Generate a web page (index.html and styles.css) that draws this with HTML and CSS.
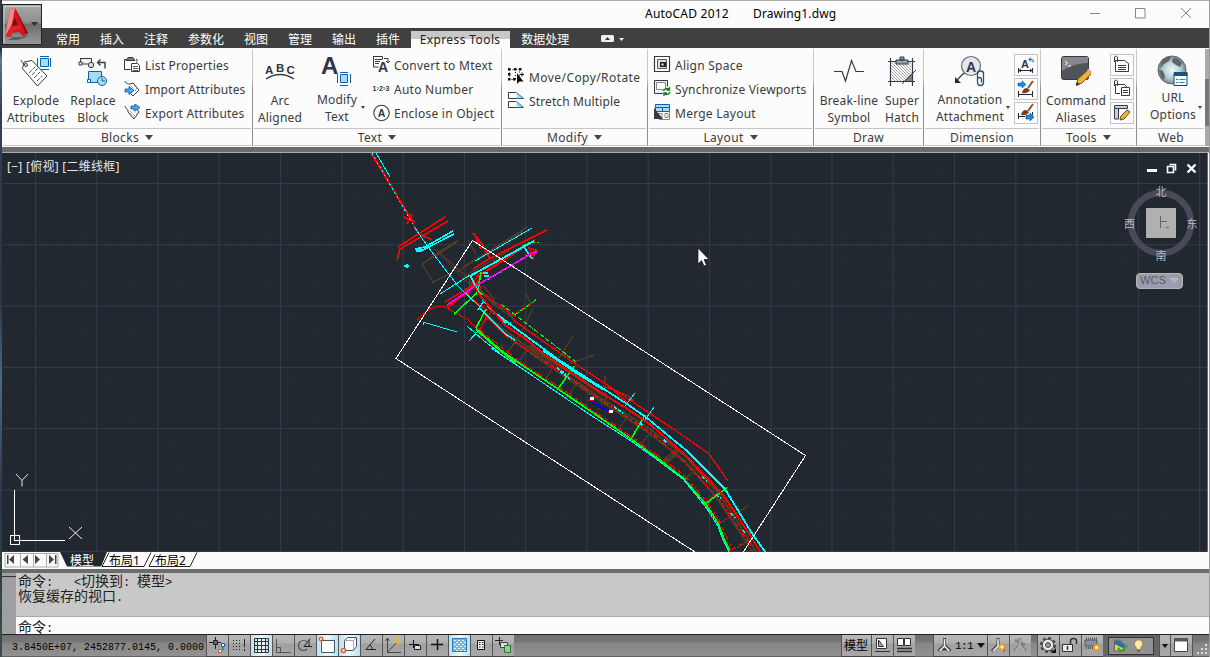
FILE: index.html
```html
<!DOCTYPE html>
<html lang="zh">
<head>
<meta charset="utf-8">
<title>AutoCAD 2012 - Drawing1.dwg</title>
<link rel="stylesheet" href="styles.css">
</head>
<body>
<div class="window">
  <header class="titlebar">
    <span class="title-app">AutoCAD 2012</span><span class="title-doc">Drawing1.dwg</span>
    <svg class="winbtns" viewBox="1085 1 120 27"><path d="M1090 13.5h10M1135.500 8.500h9.500v9.500h-9.500zM1181 8l10 10M1191 8l-10 10" fill="none" stroke="#858585"/></svg>
  </header>
  <button class="appbtn" aria-label="menu">
    <svg viewBox="2 4 40 41" width="40" height="41">
      <defs><linearGradient id="ag" x1="0" y1="0" x2="0" y2="1"><stop offset="0" stop-color="#aaa"/><stop offset=".45" stop-color="#8d8d8d"/><stop offset=".5" stop-color="#6c6c6c"/><stop offset="1" stop-color="#999"/></linearGradient></defs>
      <rect x="2.500" y="4.500" width="39" height="40" fill="url(#ag)" stroke="#222"/>
      <path d="M4 43.500V6.500H40" fill="none" stroke="#ccc"/>
      <path d="M8 40l5-3 8 0 7-3-2 3-8 3z" fill="#4a4a4a" opacity=".7"/>
      <path d="M10 9l5-1 13 25-5 3-4-4-7 1-1 4-6-1z" fill="#d3141b"/>
      <path d="M10 9l5-1-3 16-6 11-1 1z" fill="#f08a88"/>
      <path d="M15 8l13 25-2 1z" fill="#8b0d12"/>
      <path d="M13 22l2-4 3 8-7 2z" fill="#7c0b10"/><path d="M5 36l7-10 8-1 1 4-8 1-2 7z" fill="#e0242a"/>
      <path d="M31 22h7l-3.500 4z" fill="#2b2f3d"/>
    </svg>
  </button>
  <nav class="tabs">
    <span>常用</span><span>插入</span><span>注释</span><span>参数化</span><span>视图</span><span>管理</span><span>输出</span><span>插件</span><span class="tab-on">Express Tools</span><span>数据处理</span>
    <svg class="tabmin" viewBox="600 33 26 12"><rect x="601" y="35" width="13" height="7" rx="1.500" fill="#eee"/><path d="M605 40l2.500-3 2.500 3z" fill="#333"/><path d="M619 38h5l-2.500 3z" fill="#eee"/></svg>
  </nav>

  <section class="ribbon">
    <div class="panel p-blocks">
      <div class="panel-body">
        <div class="big w60"><svg viewBox="20 55 32 32"><path d="M22.500 68.500l1.500-6.500 8-1.500 15 15.500-9.500 10z" fill="#fff" stroke="#333a48"/><path d="M21 60c1 4 4 5 6 4" fill="none" stroke="#333a48"/><circle cx="26" cy="65" r="1.500" fill="#fff" stroke="#333a48"/><path d="M29 73l7-7M32 75l6-7M34 78l6-6M37 81l5-5" stroke="#555" stroke-dasharray="4 1"/><path d="M40.500 58.500h8v8h-8z" fill="#a9dcf2" stroke="#0b62a8"/><path d="M37.500 58v9M50.500 58v9M40 56.500h9M40 69.500h9" stroke="#0b62a8"/></svg><b>Explode<br>Attributes</b></div>
        <div class="big w54"><svg viewBox="77 55 32 32"><path d="M80.500 58.500h11v4M80.500 58v6h8" fill="#eee" stroke="#333a48"/><circle cx="91" cy="65" r="2.700" fill="#ddd" stroke="#333a48"/><path d="M79 62h3v3h-3z" fill="#fff" stroke="#333a48"/><path d="M98 62.500h7v6M100.500 59.500l-3 3 3 3" fill="none" stroke="#333a48" stroke-width="1.400"/><path d="M88.500 71.500h13v11h-13z" fill="#a9dcf2" stroke="#0b62a8"/><path d="M87.500 79.500h3v3h-3z" fill="#fff" stroke="#0b62a8"/><circle cx="102" cy="81" r="4.500" fill="#a9dcf2" stroke="#0b62a8"/><path d="M102 78v3h3" fill="none" stroke="#0b62a8"/></svg><b>Replace<br>Block</b></div>
        <div class="rows r4">
          <div class="row"><svg viewBox="124 57 18 18"><path d="M126.500 60.500h-2v10h6M136 60.500h1v2" fill="none" stroke="#333a48"/><path d="M128 58.500h5l2 3h-9z" fill="#777" stroke="#333a48"/><path d="M131.500 64.500h5v-1l3 3v6h-8z" fill="#fff" stroke="#333a48"/><path d="M133 67.500h5M133 69.500h5M133 71.500h5" stroke="#555"/></svg><i class="s1">List Properties</i></div>
          <div class="row"><svg viewBox="124 81 18 18"><path d="M125 82c1 3 3 3 5 3l3-1 6 7-6 6-5-5" fill="#fff" stroke="#333a48"/><path d="M131 87l5 5M134 86l3 4" stroke="#777" stroke-dasharray="1 1"/><path d="M125 90h4v-2.500l5 4-5 4V93h-4z" fill="#4aa8ec" stroke="#0b4f90" stroke-width=".8"/></svg><i class="s0">Import Attributes</i></div>
          <div class="row"><svg viewBox="124 105 18 18"><path d="M125 107c1 3 2 3 3 4l0 2 6 7 5-7-2-3" fill="#fff" stroke="#333a48"/><path d="M130 112l5 5M133 111l4 4M130 114l4 4" stroke="#777" stroke-dasharray="1 1"/><path d="M131 107h4v-2l5 3.500-5 3.500v-2h-4z" fill="#4aa8ec" stroke="#0b4f90" stroke-width=".8"/></svg><i class="s1">Export Attributes</i></div>
        </div>
      </div>
      <div class="panel-name">Blocks<u></u></div>
    </div>

    <div class="panel p-text">
      <div class="panel-body">
        <div class="big w54"><svg viewBox="264 55 32 32"><g class="glyph" font-size="11.500"><text x="265" y="74">A</text><text x="276" y="71.500">B</text><text x="286.500" y="74">C</text></g><path d="M266 79q14-9 28 0" fill="none" stroke="#333a48" stroke-width="1.300"/></svg><b>Arc<br>Aligned</b></div>
        <div class="big w60 up1"><svg viewBox="321 55 32 32"><text class="glyph" x="321" y="74" font-size="24">A</text><path d="M340.500 74.500h7v8h-7z" fill="#a9dcf2" stroke="#0b62a8"/><path d="M337.500 74v9M350.500 74v9M340 72.500h8M340 85.500h8" stroke="#0b62a8"/></svg><b>Modify<br>Text</b><s></s></div>
        <div class="rows r6">
          <div class="row"><svg viewBox="373 57 18 18"><path d="M373.500 57.500h9v3M373.500 57v11h5" fill="none" stroke="#333a48"/><path d="M375 60.500h7M375 62.500h5M375 64.500h4M384 59.500h4v4M386 62l2 2 2-2" fill="none" stroke="#333a48"/><text class="glyph" x="378" y="73" font-size="14">A</text></svg><i class="s2">Convert to Mtext</i></div>
          <div class="row"><svg viewBox="373 81 18 18"><g class="glyph" font-size="7"><text x="372.500" y="92">1</text><text x="379" y="92">2</text><text x="385.500" y="92">3</text></g><path d="M377 88l1.500 1.500-1.500 1.500M383.500 88l1.500 1.500-1.500 1.500" fill="none" stroke="#333a48" stroke-width=".8"/></svg><i class="s2">Auto Number</i></div>
          <div class="row"><svg viewBox="372 104 18 18"><circle cx="380.500" cy="113" r="7.700" fill="#fff" stroke="#333a48" stroke-width="1.100"/><text class="glyph" x="376.700" y="117" font-size="10.500">A</text></svg><i class="s2">Enclose in Object</i></div>
        </div>
      </div>
      <div class="panel-name">Text<u></u></div>
    </div>

    <div class="panel p-modify">
      <div class="panel-body">
        <div class="rows r6">
          <div class="row"><svg viewBox="508 69 18 18"><path d="M509.500 70.500h10v10h-10zM515.500 70v11" fill="none" stroke="#111" stroke-dasharray="1 2"/><path d="M508 69h2.500v2.500H508zM514 69h2.500v2.500H514zM519 69h2.500v2.500H519zM508 74h2.500v2.500H508zM508 79h2.500v2.500H508zM513 79h2.500v2.500H513z" fill="#111"/><path d="M517 74v11l2.500-2.500h4z" fill="#111"/><path d="M520 75.500h4M522 73.500v4" stroke="#111"/></svg><i class="s3">Move/Copy/Rotate</i></div>
          <div class="row"><svg viewBox="508 93 18 18"><path d="M516 93.500h-7.500v6h15M516 102.500h-7.500v6h15" fill="none" stroke="#333a48"/><path d="M516.500 93.500l7 6h-7M516.500 102.500l7 6h-7" fill="#a9dcf2" stroke="#0b62a8" stroke-width=".9"/></svg><i class="s0">Stretch Multiple</i></div>
        </div>
      </div>
      <div class="panel-name">Modify<u></u></div>
    </div>

    <div class="panel p-layout">
      <div class="panel-body">
        <div class="rows r6">
          <div class="row"><svg viewBox="654 57 18 18"><path d="M654.500 57.500h15v15h-15z" fill="#fff" stroke="#333a48" stroke-width="1.200"/><path d="M657.500 60.500h9v9h-9z" fill="#ddd" stroke="#555"/><path d="M660 63h6v5h-6z" fill="#222"/><path d="M661.500 64.500h2v2h-2z" fill="#fff"/></svg><i class="s2">Align Space</i></div>
          <div class="row"><svg viewBox="654 81 18 18"><path d="M663 94.500h-8.500v-13h13v6" fill="#eef1f4" stroke="#333a48"/><path d="M656.500 83.500h9v7h-9z" fill="#fff" stroke="#888"/><path d="M663.500 92c1-3 4-3 5.500-1.500M669.500 88v3h-3M670 93c-1 3-4 3-5.500 1.500M664 97v-3h3" fill="none" stroke="#177a1c" stroke-width="1.300"/></svg><i class="s1">Synchronize Viewports</i></div>
          <div class="row"><svg viewBox="654 105 18 18"><path d="M655.500 105.500h14v7h-14z" fill="#a9dcf2" stroke="#0b62a8"/><path d="M656 108.500h13M662.500 108v4" stroke="#0b62a8"/><path d="M658 114.500h4v4h-4zM665 114.500h3v4h-3zM659 120.500h10.500v-8" fill="#fff" stroke="#888"/><path d="M654 109v11h9z" fill="#333a48"/></svg><i class="s2">Merge Layout</i></div>
        </div>
      </div>
      <div class="panel-name">Layout<u></u></div>
    </div>

    <div class="panel p-draw">
      <div class="panel-body">
        <div class="big w66"><svg viewBox="833 55 32 32"><path d="M834 71.500h8l3.500 9.500 6-20.500 4.500 11h8" fill="none" stroke="#333a48" stroke-width="1.200"/></svg><b>Break-line<br>Symbol</b></div>
        <div class="big w40"><svg viewBox="885 55 32 32"><defs><pattern id="h" width="3" height="3" patternUnits="userSpaceOnUse"><path d="M0 0l3 3" stroke="#777" stroke-width=".7"/></pattern></defs><path d="M890.500 61.500h20v20h-20z" fill="url(#h)"/><path d="M887 61.500h27M887 81.500h27M889.500 58v28M911.500 58v28" stroke="#333a48" stroke-width="1.200"/><path d="M911 73v8h-8z" fill="#7b7f88"/><path d="M915 70l-14 14" stroke="#333a48"/><path d="M895 60h12v4h-12zM899 57h4v3h-4z" fill="#9a9ea6" stroke="#333a48"/></svg><b>Super<br>Hatch</b></div>
      </div>
      <div class="panel-name">Draw</div>
    </div>

    <div class="panel p-dim">
      <div class="panel-body">
        <div class="big w84 up1"><svg viewBox="954 55 32 32"><circle cx="971" cy="66" r="9.500" fill="#e4e7ea" stroke="#666c76" stroke-width="1.200"/><text class="glyph" x="966" y="71.500" font-size="14">A</text><path d="M964 73l-8 8" stroke="#333a48" stroke-width="1.300"/><path d="M955 77v6h6z" fill="#222837"/><path d="M977.500 80v-6.500q0-2.500 3-2.500t3 2.500v9q0 3-3 3t-3-3v-3q0-2 2-2t2 2v3" fill="none" stroke="#2c4f73" stroke-width="1.300"/></svg><b>Annotation<br>Attachment</b><s></s></div>
        <div class="mini">
          <span><svg viewBox="1017 56 18 18"><text class="glyph" x="1021" y="68" font-size="11">A</text><path d="M1018.500 68v5M1032.500 68v5M1019 70.500h13M1021 69l-2 1.500 2 1.500M1030 69l2 1.500-2 1.500" fill="none" stroke="#222837"/><path d="M1029 59.500h3q2 0 1 3M1031 57.500l-2 2 2 2" fill="none" stroke="#0b62a8"/></svg></span>
          <span><svg viewBox="1017 80 18 18"><path d="M1018.500 91v6M1032.500 91v6M1019 94.500h13" stroke="#222837"/><path d="M1018 83h4v-2l4 3.500-4 3.500v-2h-4z" fill="#1f87dc" stroke="#0b4f90" stroke-width=".6"/><path d="M1022 93q1-5 5-5l3 2q-3 4-8 3z" fill="#7b3f1b"/><path d="M1028 88l5-7" stroke="#8f5228" stroke-width="2"/></svg></span>
          <span><svg viewBox="1017 104 18 18"><path d="M1018.500 113v6M1032.500 112v3M1019 116.500h6" stroke="#222837"/><path d="M1026 115h4v-2l4 4-4 4v-2h-4z" fill="#1f87dc" stroke="#0b4f90" stroke-width=".6"/><path d="M1021 115q1-5 5-5l3 2q-3 4-8 3z" fill="#7b3f1b"/><path d="M1028 111l5-7" stroke="#8f5228" stroke-width="2"/></svg></span>
        </div>
      </div>
      <div class="panel-name">Dimension</div>
    </div>

    <div class="panel p-tools">
      <div class="panel-body">
        <div class="big w66"><svg viewBox="1060 55 32 32"><rect x="1061.500" y="56.500" width="27" height="23" rx="2" fill="#50545a" stroke="#33363b"/><path d="M1062 57h26v6q-14 0-26 8z" fill="#84888d"/><path d="M1065 61l2.500 2-2.500 2M1068 66h3" fill="none" stroke="#fff"/><path d="M1076 85l2-6 10-9 3 4-9 9z" fill="#f2b335" stroke="#8b5a12"/><path d="M1087 70l2-1.500 3 3.500-2 2z" fill="#e9a7a0"/><path d="M1076 86l1-4 3 2.500z" fill="#333"/></svg><b>Command<br>Aliases</b></div>
        <div class="mini">
          <span><svg viewBox="1113 56 18 18"><path d="M1115.500 60.500h9l4 3v8h-13z" fill="#fff" stroke="#333a48"/><path d="M1114.500 62v-5q2-2 3 0v5M1118 65.500h8M1118 67.500h8M1118 69.500h8" fill="none" stroke="#333a48"/></svg></span>
          <span><svg viewBox="1113 80 18 18"><path d="M1120 93.500h-4.500v-9h9l3 3" fill="#fff" stroke="#333a48"/><path d="M1114.500 86v-5q2-2 3 0v5" fill="none" stroke="#333a48"/><path d="M1121.500 87.500h8v8h-8z" fill="#fff" stroke="#333a48"/><path d="M1123 90.500h5M1123 92.500h5" stroke="#333a48"/></svg></span>
          <span><svg viewBox="1113 104 18 18"><path d="M1114.500 105.500h13v3h-13zM1114.500 109v10h4v-10" fill="#c9ced4" stroke="#333a48"/><path d="M1120 120l1-4 6-6 3 2-6 7z" fill="#f2b335" stroke="#6b4a18"/></svg></span>
        </div>
      </div>
      <div class="panel-name">Tools<u></u></div>
    </div>

    <div class="panel p-web">
      <div class="panel-body">
        <div class="big w62 up3"><svg viewBox="1155 55 32 32"><defs><radialGradient id="gl"><stop offset="0" stop-color="#e8fbff"/><stop offset=".6" stop-color="#b5ced5"/><stop offset="1" stop-color="#7c878e"/></radialGradient></defs><circle cx="1170" cy="70" r="14" fill="url(#gl)" stroke="#5d666c"/><path d="M1160 60q5-4 9-3l-2 4-5 3-4 4zM1171 58q6 0 9 5l-2 4-4-2-4-3zM1157 70l4 1 2 5-1 4-3-3z" fill="#5e656b"/><path d="M1172 73.500h13v12h-13z" fill="#f4fbff" stroke="#15486f"/><path d="M1172 72h13.500v4H1172z" fill="#244f73"/><path d="M1174 79.500h2M1177.500 79.500h6M1174 82.500h2M1177.500 82.500h5" stroke="#1f87dc"/></svg><b>URL<br>Options</b><s></s></div>
      </div>
      <div class="panel-name">Web</div>
    </div>
    <div class="ribbon-end"></div>
  </section>
  <div class="divider"></div>

  <main class="viewport">
    <svg class="drawing" viewBox="3 153 1204 399" width="1204" height="399">
      <defs>
        <pattern id="dots" x="35" y="183" width="12.260" height="12.260" patternUnits="userSpaceOnUse"><rect width="1" height="1" fill="#2b323b"/></pattern>
        <pattern id="grid" x="35" y="183" width="61.270" height="61.300" patternUnits="userSpaceOnUse"><path d="M.5 0V62M0 .5H62" stroke="#363b4b" fill="none"/></pattern>
      </defs>
      <rect x="3" y="153" width="1204" height="399" fill="url(#dots)"/>
      <rect x="3" y="153" width="1204" height="399" fill="url(#grid)"/>
      <g class="cad">
        <g stroke="#523a26" stroke-width="1.400">
          <path d="M380 166l37 64M392 188l14 24M422 264l35-22M422 264l11 18 19-9M430 258l28-18M425 240l12 12 26 26 33 28 14 10M437 250l60 55" />
          <path d="M457 272l70-45M463 267l60-36M465 276l45-26M468 240l8 14M483 285l12 15M527 295l3 8-8 8"/>
          <path d="M508 352l10-14 15-29M520 360l10-15M545 380l28-44M560 367l34-12M568 397l10-16M598 410l8-12-1-22M618 430l14-20M642 443l12-15M683 480l17-13M705 502l12-9M720 523l28-17M503 345l-6 4M737 548l16-10"/>
          <path d="M480 308l22 20 40 30 60 41 45 28 38 29 34 38 24 36 14 23M491 303l14 6 10 12" stroke-width="2"/>
          <path d="M484 314l18 18 40 29 60 41 44 29 38 29 33 38 24 36 12 19" stroke-width="2"/>
          <path d="M530 346l20 14 20 12 38 26" stroke-width="3"/><path d="M663 464l14-13M665 465l14-13M661 463l16-15" stroke-width="2"/>
        </g>
        <g stroke="#f00">
          <path d="M371 153l8 13 18 30 16 26" stroke-width="2"/><path d="M404 217l11 5M407 224l5-10M421 235l11 5" stroke-width="1.700"/><path d="M398 247l47-30M448 221l-48 28-3 11" stroke-width="1.700"/>
          <path d="M473 233l9 11 8 15M475 235l6 14" stroke-width="2"/><path d="M473 269l14-9 60-30M487 271l48-31M478 276l38-25" stroke-width="1.700"/><path d="M528 248l8 2-3 8-3-8M445 302l25-15 10-14M448 307l28-22 7-13M464 290l12-6" stroke-width="1.700"/>
          <path d="M417 321q9-14 26-15l24 13 10 10M470 281l-2 15 20 15"/>
          <path d="M478 280l4 13 20 14 13 10M513 315l23-15M479 331l9-18M480 329l12-19"/>
          <path d="M488 317l22 22 33 22 24 15 43 30 43 28 30 27 17 17 20 23 18 26 20 28" stroke-width="1.500" stroke-dasharray="5 3 2 2"/>
          <path d="M513 320l64 45 50 33 58 39 24 17 19 27M603 386l25 10 6 5M613 390l16 14" stroke-width="1.300"/>
        </g>
        <g stroke="#0f0">
          <path d="M454 314l23-21M481 272l-3 18 4 5M476 328l10-19M558 389l12-17 4-6M631 439l14-24M704 505l17-13 6-4" stroke-width="1.600"/>
          <path d="M501 304l75 58M515 315l22-16M530 242h9M522 246l8-4" stroke-dasharray="5 2"/>
          <path d="M476 329l18 16 22 18" stroke-width="2.500"/><path d="M477 330l23 20 25 17 33 22 34 23 39 27 29 21 23 18 22 25 13 20 6 16 6 12" stroke-width="1.800"/>
        </g>
        <path d="M478 328l23 19 25 19 33 21 33 23 40 27 29 21 24 18 22 26 13 20 6 14 7 14M729 551l20-11" stroke="#f00" stroke-width="1.300" stroke-dasharray="8 4 3 3"/>
        <g stroke="#0ff">
          <path d="M376 153l14 24"/><path d="M372 153l43 75" stroke-dasharray="2 3"/><path d="M415 228l13 19 30 39 22 21"/>
          <path d="M415 249l10-2 28-16M421 251l33-17" stroke-width="1.600"/><path d="M416 250h6" stroke-width="3"/><path d="M404 266h5M407 264v4" stroke-width="2"/>
          <path d="M440 294l30-19M475 261l57-33M423 325v-3l34 10"/><path d="M470 276l64-35" stroke-width="2"/><path d="M488 279l46-27M524 247l8 12" stroke-width="1.600"/><path d="M483 273h5M484 276h5" stroke-width="2"/>
          <path d="M470 275l8 16 4 8 12 14 12 10M485 299l-7 11M480 308l27 27 8 5M506 327l5-5" stroke-width="1.400"/>
          <path d="M543 350l34 23 26 16" stroke-width="2.600"/><path d="M486 303l8 9 28 21 37 27 68 44 20 14 40 33 38 38 28 46 13 18" stroke-width="1.800"/>
          <path d="M625 406l10-13M645 420l9-13M467 326l16 14 17 13M469 341l10-11"/>
          <path d="M491 348l33 22 34 23 34 23 39 25 28 20 24 18 22 27 13 20 5 14 7 14"/>
          <path d="M557 368l9 6M560 372l10 7M614 407l9 6M640 423l4 4M664 440l4 4M702 477l5 4M716 495l5 3M731 513l4 5M743 530l3 4" stroke-width="1.500" stroke-dasharray="3 2"/>
        </g>
        <path d="M475 287l3 6 27 32 22 15 17 14 36 25 25 16 27 17 19 13 34 30 38 40 27 40 12 20" stroke="#f00" stroke-width="2"/>
        <path d="M447 305l25-17 64-37" stroke="#f0f" stroke-width="1.500"/><path d="M533 252h4" stroke="#f0f" stroke-width="2"/>
        <path d="M592 402l18 10" stroke="#00f" stroke-width="3" stroke-dasharray="3 1"/><path d="M589 400h4M608 412h5" stroke="#f00" stroke-width="2"/><path d="M590 398.500h4M609 411.500h4" stroke="#fff" stroke-width="3"/>
        <path d="M472.500 240.500l333 215-62.500 97M472.500 240.500l-76.500 118 299 193.500" stroke="#fff"/>
        <path d="M10.500 535.500h9v9h-9zM14.500 490v50.500H65" stroke="#fff"/>
      </g>
      <path d="M16 474l6 6.500 6-6.500M22 480.500v6M69 527l13 12M82 527l-13 12" fill="none" stroke="#eee"/>
      <path d="M698 248v16l3.500-3.500 2.500 5.500 2.500-1-2.500-5.500h5z" fill="#fff" stroke="#111" stroke-width=".7"/>
      <path d="M1147 169h10v3h-10z" fill="#fff"/><path d="M1167.500 166.500h6v6h-6zM1169.500 164.500h6v6" fill="none" stroke="#fff" stroke-width="1.600"/><path d="M1187.500 164.500l8 8M1195.500 164.500l-8 8" stroke="#fff" stroke-width="2.400"/>
      <circle cx="1161" cy="223" r="30" fill="none" stroke="#474b57" stroke-width="6.500"/>
      <rect x="1146" y="208" width="30" height="30" fill="#b0b0b0"/>
      <path d="M1160.500 216v12M1161 221.500h6M1166 227.500h3" fill="none" stroke="#606369"/>
      <g class="compass"><text x="1161" y="196">北</text><text x="1129.500" y="227.500">西</text><text x="1192" y="227.500">东</text><text x="1161" y="259.500">南</text></g>
      <rect x="1136.500" y="273.500" width="46" height="15" rx="3.500" fill="#9a9dad" stroke="#b8b7b3"/>
      <text x="1140" y="283.500" class="wcs">WCS</text><path d="M1170 278.500h8l-4 4z" fill="#a9acba" stroke="#c3c3c0"/>
    </svg>
    <span class="viewlabel">[−] [俯视] [二维线框]</span>
  </main>

  <div class="sheets">
    <svg viewBox="3 552 200 17" width="200" height="17">
      <path d="M5 553.500h53v13.500H5zM20.500 553v14M33.500 553v14M46.500 553v14" fill="#fafafa" stroke="#aaa"/>
      <path d="M7 555v9h1.500v-9zM14 555v9l-5-4.500zM28 555v9l-5.500-4.500zM35 555v9l5-4.500zM49 555v9l5-4.500zM55 555v9h1.500v-9z" fill="#444"/>
      <path d="M60 552h47l-6 14.500H67z" fill="#212830"/>
      <path d="M102 566.500l7-14M102 566.500h42l7-14M149 566.500h41l7-14M149 566.500l6-12" fill="none" stroke="#222"/>
      <g><text x="70" y="564.500" fill="#fff">模型</text><text x="109" y="564.500">布局1</text><text x="155" y="564.500">布局2</text></g>
    </svg>
  </div>

  <section class="command">
    <div class="grip"></div>
    <div class="cmd-main">
      <div class="history"><div>命令<em>:&nbsp;&nbsp;&nbsp;&lt;</em>切换到<em>:&nbsp;</em>模型<em>&gt;</em></div><div>恢复缓存的视口<em>.</em></div></div>
      <div class="prompt">命令<em>:</em></div>
    </div>
  </section>

  <footer class="status">
    <div class="coords">3.8450E+07, 2452877.0145, 0.0000</div>
    <div class="toggles">
      <span><svg viewBox="0 0 21 21"><path d="M2 7.500h12M8.500 2v12" stroke="#223"/><path d="M6.500 5.500h4v4h-4z" fill="#667" stroke="#223"/><path d="M14.500 8.500h3v3h-3z" fill="#fff" stroke="#0b62a8"/><path d="M11.500 14.500h3v3h-3z" fill="#fff" stroke="#e25822"/><path d="M16 12v3h-1" stroke="#0b62a8" fill="none"/></svg></span>
      <span><svg viewBox="0 0 21 21"><path d="M4 5.500h9M4 8.500h9M4 11.500h9M4 14.500h9" stroke="#222" stroke-dasharray="1 2"/><path d="M15.500 4v8M15.500 14v2" stroke="#222"/></svg></span>
      <span class="on"><svg viewBox="0 0 21 21"><path d="M3.500 3.500h14v14h-14zM6.500 3v15M10.500 3v15M14.500 3v15M3 6.500h15M3 10.500h15M3 14.500h15" fill="none" stroke="#333"/></svg></span>
      <span><svg viewBox="0 0 21 21"><path d="M3.500 4v13.500h14M3.500 12.500h4v5" fill="none" stroke="#555"/></svg></span>
      <span><svg viewBox="0 0 21 21"><path d="M12 14a5 5 0 1 1 0-7" fill="none" stroke="#555" stroke-width="1.200"/><path d="M9 11.500h8M9 11.500l6-8M14 5v6" fill="none" stroke="#222"/></svg></span>
      <span class="on"><svg viewBox="0 0 21 21"><path d="M4.500 5.500h13v12h-13z" fill="#fff" stroke="#456"/><circle cx="4" cy="4" r="1.700" fill="#fff" stroke="#e25822" stroke-width="1.300"/></svg></span>
      <span class="on"><svg viewBox="0 0 21 21"><path d="M5.500 5.500l3-3h9v9l-3 4h-9z" fill="#fff" stroke="#456"/><path d="M5.500 5.500h9v10M14.500 5.500l3-3" fill="none" stroke="#9ab"/><circle cx="4.500" cy="15.500" r="2" fill="#fff" stroke="#e25822" stroke-width="1.400"/></svg></span>
      <span><svg viewBox="0 0 21 21"><path d="M14 4L5 14.500h10M9 10q2 1 2 4" fill="none" stroke="#222"/></svg></span>
      <span><svg viewBox="0 0 21 21"><path d="M4.500 4v13.500H18M4.500 17l9-9M2.500 6l2-3 2 3" fill="none" stroke="#444"/><path d="M15 2l-4 6h4l-3 5 6-7h-3l2-4z" fill="#ffab2e"/></svg></span>
      <span><svg viewBox="0 0 21 21"><path d="M4 9.500h10M8.500 5v8" stroke="#111"/><path d="M9.500 10.500h6v4h-6z" fill="#ddd" stroke="#222"/></svg></span>
      <span><svg viewBox="0 0 21 21"><path d="M4 9.500h12M10.500 4v11" stroke="#111" stroke-width="1.500"/></svg></span>
      <span class="on"><svg viewBox="0 0 21 21"><path d="M3.500 3.500h14v13h-14z" fill="#71b8e8" stroke="#2d78b7"/><path d="M5 5.500h12M5 9.500h12M5 13.500h12" stroke="#eaf6ff" stroke-dasharray="2 2"/><path d="M7 7.500h10M7 11.500h10M7 15.500h10" stroke="#eaf6ff" stroke-dasharray="2 2"/></svg></span>
      <span><svg viewBox="0 0 21 21"><path d="M6.500 5.500h7v9h-7z" fill="#eee" stroke="#111"/><path d="M8 7.500h1.500M11 7.500h1.500M8 9.500h1.500M11 9.500h1.500M8 12h1.500M11 12h1.500" stroke="#222"/></svg></span>
      <span><svg viewBox="0 0 21 21"><path d="M2 5.500h8M6.500 2v8" stroke="#223"/><path d="M7.500 7.500h7v5h-7z" fill="#ddd" stroke="#444"/><path d="M11.500 10.500h6v7h-6z" fill="#8fd08b" stroke="#2c7a2c"/></svg></span>
    </div>
    <div class="spacer"></div>
    <div class="toggles">
      <span class="model">模型</span>
      <span><svg viewBox="0 0 21 21"><path d="M4.500 3.500h10v10h-10z" fill="#fff" stroke="#333"/><path d="M6.500 5v6.500h5z" fill="#aaa" stroke="#333"/><path d="M3 16.500h15" stroke="#333"/></svg></span>
      <span><svg viewBox="0 0 21 21"><path d="M3.500 3.500h6v7h-6zM10.500 3.500h6v7h-6z" fill="#fff" stroke="#333"/><path d="M3 13.500h15M3 16.500h15" stroke="#333" stroke-width="1.500"/></svg></span>
    </div>
    <div class="gap18"></div>
    <div class="toggles">
      <span class="scale"><svg viewBox="0 0 21 21"><path d="M10.500 3v7l-6 6M10.500 10l6 6M8 14h5" fill="none" stroke="#444" stroke-width="3"/><path d="M10.500 4v7l-5 5M10.500 11l5 5" fill="none" stroke="#eee" stroke-width="1.500"/></svg>1:1<u></u></span>
      <span><svg viewBox="0 0 21 21"><path d="M10 3v7l-6 6M10 10l6 6" fill="none" stroke="#444" stroke-width="3"/><path d="M10 4v7l-5 5M10 11l5 5" fill="none" stroke="#eee" stroke-width="1.500"/><circle cx="14" cy="12" r="2.500" fill="#fff3b0" stroke="#f39a1b" stroke-width="1.600"/></svg></span>
      <span><svg viewBox="0 0 21 21"><path d="M10 3v7l-6 6M10 10l6 6M5 5l10 5" fill="none" stroke="#808080" stroke-width="3"/><path d="M10 4v7l-5 5M10 11l5 5" fill="none" stroke="#bbb" stroke-width="1.300"/></svg></span>
    </div>
    <div class="gap6"></div>
    <div class="toggles">
      <span><svg viewBox="0 0 21 21"><circle cx="10" cy="10" r="7" fill="none" stroke="#444" stroke-width="2" stroke-dasharray="3 2.500"/><circle cx="10" cy="10" r="5.700" fill="#eee" stroke="#444"/><circle cx="10" cy="10" r="2.500" fill="#999" stroke="#444"/><path d="M18 13v5h-5z" fill="#111"/></svg></span>
      <span><svg viewBox="0 0 21 21"><path d="M2.500 9.500h10v7h-10z" fill="#eee" stroke="#333"/><path d="M10.500 9V6q0-2.500 3-2.500t3 2.500v3M7.500 11v4" fill="none" stroke="#333" stroke-width="1.500"/></svg></span>
      <span><svg viewBox="0 0 21 21"><path d="M3 5h12v6H3z" fill="#8792a1" stroke="#556"/><path d="M4 3.500h11M4 13h7" stroke="#556" stroke-dasharray="1 1" stroke-width="2"/><circle cx="14.500" cy="12.500" r="2.500" fill="#fff3b0" stroke="#f39a1b" stroke-width="1.600"/></svg></span>
    </div>
    <div class="tray"><svg viewBox="0 0 46 18"><path d="M4.500 2.500h7l4 4v8h-11z" fill="#f3d64a" stroke="#556"/><path d="M5 3h6l5 5v4l-5-2-6-3z" fill="#2e6fb4"/><path d="M8 11l4 4 7-7" fill="none" stroke="#35a82f" stroke-width="2.300"/><path d="M31.500 2a4.500 4.500 0 0 1 3 8l-1 3h-4l-1-3a4.500 4.500 0 0 1 3-8z" fill="#fbeab0" stroke="#a98030"/><path d="M30 13h3v3h-3z" fill="#666"/></svg></div>
    <div class="toggles">
      <span class="narrow"><u></u></span>
      <span><svg viewBox="0 0 21 21"><path d="M3.500 3.500h13v13h-13z" fill="#fff" stroke="#444"/><path d="M3 3h14v3.500H3z" fill="#556"/></svg></span>
    </div>
    <div class="corner"><svg viewBox="0 0 16 16"><path d="M12 3h2v2h-2zM8 7h2v2H8zM12 7h2v2h-2zM4 11h2v2H4zM8 11h2v2H8zM12 11h2v2h-2z" fill="#ddd"/></svg></div>
  </footer>
</div>
</body>
</html>
```

FILE: styles.css
```css
* { box-sizing: border-box; }
body {
  margin: 0;
  width: 1210px;
  height: 657px;
  overflow: hidden;
  background: linear-gradient(#2a3646 0, #2a3646 50px, #61789a 60px, #2f3f55 110px, #2a3646 300px, #4b6a86 380px, #2a3646 500px, #3c4d4a 657px);
  font: 12px/17px "Noto Sans", "Noto Sans CJK SC", sans-serif;
  color: #3b3b3b;
}
.window {
  position: relative;
  display: flex;
  flex-direction: column;
  width: 1208px;
  height: 657px;
  margin-left: 2px;
  border-top: 1px solid #a9a9a9;
  border-right: 1px solid #9a9a9a;
  background: #fcfcfc;
}
.titlebar {
  display: flex;
  height: 27px;
  padding: 4px 4px 0 643px;
  color: #000;
}
.title-app { width: 108px; letter-spacing: .22px; }
.title-doc { flex: 1; letter-spacing: .12px; }
.winbtns { width: 120px; height: 27px; margin-top: -4px; }
.appbtn {
  position: absolute;
  z-index: 2;
  left: 0;
  top: 3px;
  padding: 0;
  border: 0;
  background: none;
}
.appbtn svg { display: block; }

.tabs {
  display: flex;
  height: 20px;
  padding-left: 44px;
  background: #404040;
  color: #fff;
  line-height: 23px;
}
.tabs span { padding: 0 10px; white-space: nowrap; height: 20px; }
.tabs .tab-on {
  width: 99px;
  height: 17px;
  margin: 3px 1px 0 1px;
  padding: 0 0 0 8.5px;
  letter-spacing: .4px;
  background: linear-gradient(#c8c8c8 8px, #fcfcfc 8px);
  color: #222;
  line-height: 17px;
}
.tabmin { width: 26px; height: 12px; margin: 5px 0 0 21px; }

.ribbon { display: flex; height: 99px; padding-top: 1px; }
.panel {
  display: flex;
  flex-direction: column;
  flex: none;
  height: 97px;
  border-right: 1px solid;
  border-image: linear-gradient(#c9c9c9 30px, #8f8f8f 40px) 1;
}
.p-blocks { width: 251px; }
.p-text { width: 249px; }
.p-modify { width: 146px; }
.p-layout { width: 166px; }
.p-draw { width: 110px; }
.p-dim { width: 117px; }
.p-tools { width: 96px; }
.p-web { width: 68px; border-right: 0; }
.panel-body { display: flex; height: 79px; }
.p-blocks .panel-body { padding-left: 4px; }
.p-draw .panel-body, .p-tools .panel-body { padding-left: 2px; }
.p-dim .panel-body { padding-left: 4px; }
.p-web .panel-body { padding-left: 5px; }
.panel-name {
  display: flex;
  align-items: center;
  justify-content: center;
  gap: 6px;
  height: 18px;
  margin: 0 1px;
  border-top: 1px solid #c6c6c6;
  border-bottom: 1px solid #c6c6c6;
  letter-spacing: .35px;
}
u { border: 4px solid transparent; border-top: 5px solid #444; border-bottom: 0; }
.big {
  position: relative;
  display: flex;
  flex-direction: column;
  align-items: center;
  flex: none;
  padding-top: 6px;
}
.big svg { width: 32px; height: 32px; flex: none; }
.big b {
  margin-top: 5px;
  font-weight: 400;
  text-align: center;
  white-space: nowrap;
  letter-spacing: .2px;
}
.big.up1 b { margin-top: 4px; }
.big.up3 b { margin-top: 2px; }
.big s {
  position: absolute;
  right: 2px;
  bottom: 19px;
  border: 2.5px solid transparent;
  border-top: 3px solid #444;
  border-bottom: 0;
}
.w40 { width: 40px; }
.w54 { width: 54px; }
.w60 { width: 60px; }
.w62 { width: 62px; }
.w66 { width: 66px; }
.w84 { width: 84px; }
.rows { padding-top: 4px; }
.p-modify .rows { padding-top: 16px; }
.r4 { margin-left: 4px; }
.r6 { margin-left: 6px; }
.row { display: flex; align-items: center; height: 24px; gap: 3px; white-space: nowrap; }
.row svg { width: 18px; height: 18px; }
.row i { font-style: normal; }
.ribbon svg { overflow: visible; }
.s0 { letter-spacing: .12px; }
.s1 { letter-spacing: .2px; }
.s2 { letter-spacing: .25px; }
.s3 { letter-spacing: .43px; }
.mini { display: flex; flex-direction: column; gap: 2px; padding-top: 5px; margin-left: 2px; }
.p-tools .mini { margin-left: 1px; }
.mini span { display: flex; width: 24px; height: 22px; padding: 1px 2px; border: 1px solid #c4c4c4; }
.mini svg { width: 18px; height: 18px; }
.glyph { font-family: "Liberation Sans", sans-serif; font-weight: 700; fill: #2f3542; }
.ribbon-end { width: 4px; height: 97px; background: linear-gradient(#aaa 30px, #777 30px 77px, #aaa 77px); }

.divider { height: 6px; background: #6b6b6b; border-bottom: 1px solid #aaa; }
.viewport { position: relative; height: 399px; width: 1206px; padding-left: 1px; background: #212830; border-right: 1px solid #666; }
.drawing { display: block; }
.cad { fill: none; shape-rendering: crispEdges; }
.viewlabel { position: absolute; left: 5px; top: 5px; color: #e6e6e6; letter-spacing: .27px; white-space: nowrap; }
.compass { font-size: 11px; fill: #b9bbc0; text-anchor: middle; }
.wcs { font-family: "Liberation Sans", sans-serif; font-size: 11px; letter-spacing: .2px; fill: #595d66; }

.sheets { height: 17px; padding-left: 1px; font-size: 12px; }
.sheets svg { display: block; }

.command { display: flex; height: 65px; border-top: 4px solid #6b6d6b; }
.grip {
  width: 14px;
  background: radial-gradient(circle, #333 .6px, transparent .8px) 1px 2px / 2px 3px repeat-x, linear-gradient(#9f9f9f, #9f9f9f);
}
.cmd-main { flex: 1; font: 14px/15px "Noto Sans CJK SC", sans-serif; color: #222; }
.history { height: 44px; padding: 0 0 0 2px; background: #c8c8c8; border-bottom: 1px solid #aaa; }
.history div { height: 15px; }
.prompt { padding: 2px 0 0 2px; }
em { font: 12px/12px "Liberation Mono", monospace; letter-spacing: -.2px; }

.status {
  display: flex;
  height: 23px;
  border-top: 1px solid #222;
  background: linear-gradient(#707070, #777 7px, #858585 8px, #919191 21px, #333 22px);
}
.coords {
  width: 204px;
  padding: 5px 0 0 10px;
  font: 10px/16px "Liberation Mono", monospace;
  color: #000;
  white-space: nowrap;
}
.toggles { display: flex; height: 22px; }
.toggles span {
  display: flex;
  width: 22px;
  height: 22px;
  border-left: 1px solid #555;
  border-bottom: 1px solid #444;
  background: linear-gradient(#b8b8b8, #b0b0b0 8px, #a0a0a0 9px, #a8a8a8);
  color: #000;
}
.toggles svg { flex: none; width: 21px; height: 21px; }
.toggles .on { background: linear-gradient(90deg, #a9dcf299, #fff9, #a9dcf299), #d5e9f0; }
.spacer { flex: 1; }
.toggles .model { width: 30px; padding-left: 2px; line-height: 22px; }
.toggles .scale { width: 54px; align-items: center; font: 11px "Liberation Mono", monospace; letter-spacing: -.6px; }
.scale u { margin-left: 4px; border-top-color: #111; }
.gap18 { width: 18px; }
.gap6 { width: 6px; }
.tray { width: 56px; padding: 2px 5px; background: #666; }
.tray svg { display: block; width: 46px; height: 18px; background: #929292; border: 1px solid #333; }
.toggles .narrow { width: 11px; align-items: center; justify-content: center; }
.narrow u { border-width: 4px 3px 0; border-top-color: #111; }
.corner { width: 17px; border-left: 1px solid #555; }
.corner svg { display: block; width: 16px; height: 16px; margin-top: 6px; }
```
